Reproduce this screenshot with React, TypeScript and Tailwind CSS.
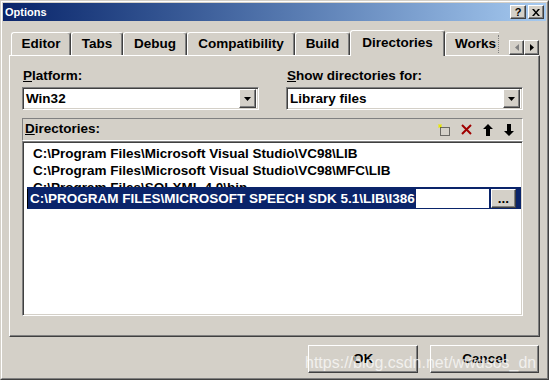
import React from "react";

const raised =
  "border border-t-white border-l-white border-b-[#404040] border-r-[#404040] shadow-[inset_-1px_-1px_0_#808080] bg-[#d4d0c8]";
const sunken =
  "border border-t-[#808080] border-l-[#808080] border-b-white border-r-white shadow-[inset_1px_1px_0_#404040,inset_-1px_-1px_0_#d4d0c8]";

const DownTri = () => (
  <svg width="7" height="4" viewBox="0 0 7 4">
    <polygon points="0,0 7,0 3.5,4" fill="#000" />
  </svg>
);

const Combo: React.FC<{ value: string }> = ({ value }) => (
  <div className={`h-[23px] bg-white flex items-center ${sunken} p-[2px]`}>
    <span className="flex-1 pl-[1px] leading-[17px]">{value}</span>
    <div className={`w-[17px] h-[19px] flex items-center justify-center ${raised}`}>
      <DownTri />
    </div>
  </div>
);

const tabs = [
  { label: "Editor", w: "w-[60px]" },
  { label: "Tabs", w: "w-[52px]" },
  { label: "Debug", w: "w-[64px]" },
  { label: "Compatibility", w: "w-[108px]" },
  { label: "Build", w: "w-[55px]" },
];

const tabBase =
  "border-t border-l border-white border-r border-r-[#404040] shadow-[inset_-1px_0_0_#808080] rounded-t-[3px] bg-[#d4d0c8] flex items-center";

export default function App() {
  return (
    <div className="w-[549px] h-[380px] bg-[#d4d0c8] border border-t-[#d4d0c8] border-l-[#d4d0c8] border-b-[#404040] border-r-[#404040] font-['Liberation_Sans',Arial,sans-serif] text-[13.5px] font-bold text-black select-none">
      <div className="h-full border border-t-white border-l-white border-b-[#808080] border-r-[#808080] p-px flex flex-col relative">
        {/* title bar */}
        <div className="h-[18px] flex items-center bg-linear-to-r from-[#0a246a] to-[#a6caf0] pl-[2px] pr-[2px]">
          <span className="text-white text-[11px] font-bold flex-1">Options</span>
          <div className={`w-[16px] h-[14px] flex items-center justify-center text-[11px] leading-none ${raised}`}>?</div>
          <div className={`ml-[2px] w-[16px] h-[14px] flex items-center justify-center ${raised}`}>
            <svg width="8" height="7" viewBox="0 0 8 7">
              <path d="M0 0h2l2 2.5L6 0h2L5 3.5 8 7H6L4 4.5 2 7H0l3-3.5z" fill="#000" />
            </svg>
          </div>
        </div>

        <div className="px-[6px] flex flex-col flex-1">
          {/* tab row */}
          <div className="mt-[9px] h-[26px] flex items-end pl-[2px]">
            {tabs.map((t) => (
              <div key={t.label} className={`${t.w} h-[23px] mb-px justify-center ${tabBase}`}>
                {t.label}
              </div>
            ))}
            <div className={`w-[95px] h-[26px] relative z-10 justify-center ${tabBase}`}>Directories</div>
            <div className="w-[56px] h-[23px] mb-px overflow-hidden relative">
              <div className={`w-[95px] h-[23px] pl-[9px] ${tabBase}`}>Works</div>
              <div className="absolute right-[2px] top-[3px] bottom-[2px] border-r border-dotted border-[#808080]" />
              <div className="absolute right-0 top-0 bottom-0 w-[2px] bg-[#d4d0c8]" />
            </div>
            <div className="ml-auto mr-px mb-px flex">
              <div className={`w-[15px] h-[15px] flex items-center justify-center ${raised}`}>
                <svg width="4" height="7" viewBox="0 0 4 7">
                  <polygon points="4,0 4,7 0,3.5" fill="#808080" />
                </svg>
              </div>
              <div className={`w-[15px] h-[15px] flex items-center justify-center ${raised}`}>
                <svg width="4" height="7" viewBox="0 0 4 7">
                  <polygon points="0,0 0,7 4,3.5" fill="#000" />
                </svg>
              </div>
            </div>
          </div>

          {/* tab panel */}
          <div className="-mt-px w-[531px] h-[282px] border border-t-white border-l-white border-b-[#404040] border-r-[#404040] shadow-[inset_-1px_-1px_0_#808080] pl-[12px] pt-[12px]">
            <div className="flex gap-[27px]">
              <div className="w-[237px] flex flex-col">
                <span className="h-[15px] leading-[15px] pl-px mb-[4px]">
                  <u>P</u>latform:
                </span>
                <Combo value="Win32" />
              </div>
              <div className="w-[237px] flex flex-col">
                <span className="h-[15px] leading-[15px] pl-px mb-[4px]">
                  <u>S</u>how directories for:
                </span>
                <Combo value="Library files" />
              </div>
            </div>

            <div className="mt-[8px] w-[501px]">
              <div className="h-[23px] border border-t-[#808080] border-l-[#808080] border-b-white border-r-white flex items-center pl-[2px] pr-[8px]">
                <span className="flex-1">
                  <u>D</u>irectories:
                </span>
                <div className="flex items-center gap-[11px]">
                  <svg width="12" height="12" viewBox="0 0 12 12">
                    <path d="M0.5 0.5l3 3M3.5 0.5l-3 3M2 0v4M0 2h4" stroke="#e8e800" strokeWidth="1" />
                    <rect x="2.5" y="3.5" width="9" height="8" fill="none" stroke="#000" strokeDasharray="1 1" />
                  </svg>
                  <svg width="11" height="11" viewBox="0 0 11 11">
                    <path d="M1 1l9 9M10 1L1 10" stroke="#a00000" strokeWidth="2" />
                  </svg>
                  <svg width="10" height="12" viewBox="0 0 10 12">
                    <polygon points="5,0 10,5 7,5 7,12 3,12 3,5 0,5" fill="#000" />
                  </svg>
                  <svg width="10" height="12" viewBox="0 0 10 12">
                    <polygon points="5,12 10,7 7,7 7,0 3,0 3,7 0,7" fill="#000" />
                  </svg>
                </div>
              </div>

              <div className={`h-[175px] bg-white p-[2px] relative ${sunken}`}>
                <div className="pt-[1px] pl-[8px] overflow-hidden h-[44px]">
                  <div className="h-[17px] leading-[17px] whitespace-nowrap">C:\Program Files\Microsoft Visual Studio\VC98\LIB</div>
                  <div className="h-[17px] leading-[17px] whitespace-nowrap">C:\Program Files\Microsoft Visual Studio\VC98\MFC\LIB</div>
                  <div className="h-[17px] leading-[17px] whitespace-nowrap">C:\Program Files\SQLXML 4.0\bin</div>
                </div>
                <div className="absolute left-[4px] right-[1px] top-[45px] h-[22px] bg-[#0a246a] flex items-stretch pt-[2px] pb-px pr-[5px]">
                  <div className="flex-1 bg-white border-l border-black flex items-stretch">
                    <span className="bg-[#0a246a] text-white pl-[2px] pr-px leading-[19px] whitespace-nowrap">
                      C:\PROGRAM FILES\MICROSOFT SPEECH SDK 5.1\LIB\I386
                    </span>
                  </div>
                  <div className={`ml-[2px] w-[25px] flex items-end justify-center pb-[2px] leading-none ${raised}`}>...</div>
                </div>
              </div>
            </div>
          </div>

          {/* buttons */}
          <div className="mt-[8px] flex justify-end gap-[12px] pr-px">
            <div className={`w-[110px] h-[28px] flex items-center justify-center ${raised}`}>OK</div>
            <div className={`w-[109px] h-[28px] flex items-center justify-center ${raised}`}>Cancel</div>
          </div>
        </div>

        <div className="absolute left-[303px] top-[349px] text-[16px] font-normal text-white/70 whitespace-nowrap pointer-events-none">
          https://blog.csdn.net/wwdsos_dn
        </div>
      </div>
    </div>
  );
}
